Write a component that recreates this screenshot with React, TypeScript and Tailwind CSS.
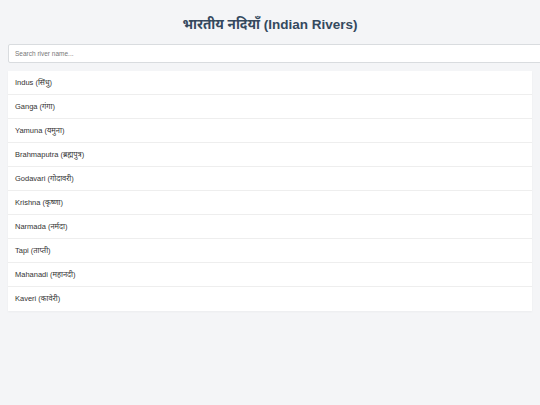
const rivers = [
  'Indus (सिंधु)',
  'Ganga (गंगा)',
  'Yamuna (यमुना)',
  'Brahmaputra (ब्रह्मपुत्र)',
  'Godavari (गोदावरी)',
  'Krishna (कृष्णा)',
  'Narmada (नर्मदा)',
  'Tapi (ताप्ती)',
  'Mahanadi (महानदी)',
  'Kaveri (कावेरी)',
]

export default function App() {
  return (
    <div className="min-h-screen overflow-x-hidden bg-[#f4f5f7] px-2 pt-[15px] font-['Liberation_Sans','Noto_Sans',sans-serif]">
      <h1 className="text-center text-[13.5px] leading-[20px] font-bold text-[#34495e]">भारतीय नदियाँ (Indian Rivers)</h1>

      <input
        type="text"
        placeholder="Search river name..."
        className="mt-[9px] box-content block w-full h-[9px] px-[6px] py-[4px] text-[6.5px] leading-[9px] bg-white border border-[#d9dcdf] rounded-[2px] placeholder:text-[#777] outline-none"
      />

      {/* Liste */}
      <ul className="mt-[8px] bg-white shadow-[0_1px_2px_rgba(0,0,0,0.04)]">
        {rivers.map(r => (
          <li key={r} className="h-[24px] flex items-center px-[7px] border-b border-[#eeeeee] last:border-b-0 text-[7.5px] text-[#333]">
            {r}
          </li>
        ))}
      </ul>
    </div>
  )
}
